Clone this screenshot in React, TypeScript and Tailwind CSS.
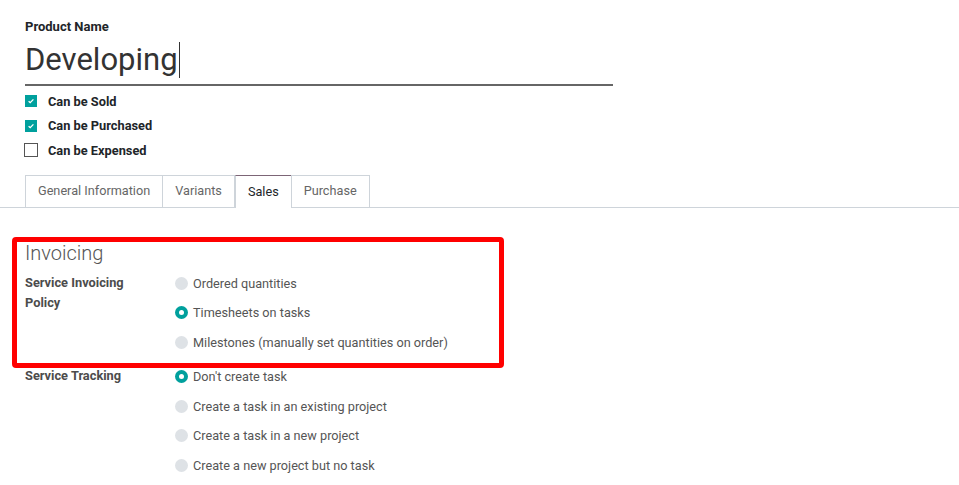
import React from "react";

const font = { fontFamily: "Roboto, 'Noto Sans', sans-serif" };

function Check({ checked }: { checked: boolean }) {
  return checked ? (
    <span className="flex h-[12px] w-[12px] items-center justify-center bg-[#00a09d]">
      <svg width="8" height="8" viewBox="0 0 8 8">
        <path d="M1.6 4.2 L3.2 5.6 L6.4 2.4" stroke="white" strokeWidth="1.3" fill="none" />
      </svg>
    </span>
  ) : (
    <span className="block h-[14px] w-[14px] border border-[#555] bg-white -ml-[1px]" />
  );
}

function Radio({ checked, label }: { checked: boolean; label: string }) {
  return (
    <div className="flex h-[29.5px] items-center">
      {checked ? (
        <span className="flex h-[13px] w-[13px] items-center justify-center rounded-full bg-[#00a09d]">
          <span className="h-[5px] w-[5px] rounded-full bg-white" />
        </span>
      ) : (
        <span className="h-[13px] w-[13px] rounded-full bg-[#dee2e6]" />
      )}
      <span className="ml-[5px] text-[12.7px] text-[#555]">{label}</span>
    </div>
  );
}

export default function App() {
  return (
    <div className="relative h-[485px] w-[959px] overflow-hidden bg-white text-[#212529]" style={font}>
      <div className="px-[25px] pt-[18px]">
        <div className="text-[13px] font-bold leading-[18px] text-[#212529]">Product Name</div>
        <div className="mt-[3px] flex h-[47px] w-[588px] items-start border-b-2 border-[#666] pt-[1px]">
          <span className="text-[31px] leading-[40px] text-[#333]">Developing</span>
          <span className="ml-[1px] mt-[2px] h-[36px] w-[1.5px] bg-[#333]" />
        </div>
        <div className="mt-[3px] flex flex-col">
          {[
            ["Can be Sold", true],
            ["Can be Purchased", true],
            ["Can be Expensed", false],
          ].map(([l, c]) => (
            <div key={l as string} className="flex h-[24.5px] items-center">
              <div className="flex w-[23px] items-center">
                <Check checked={c as boolean} />
              </div>
              <span className="text-[12.8px] font-bold text-[#212529]">{l as string}</span>
            </div>
          ))}
        </div>
      </div>

      <div className="mt-[12px] flex border-b border-[#ced4da] pl-[25px]">
        {["General Information", "Variants", "Sales", "Purchase"].map((t) => {
          const active = t === "Sales";
          return (
            <div
              key={t}
              className={
                active
                  ? "-mb-[1px] flex h-[33px] items-center border-x border-t border-x-[#ced4da] border-t-[#7c6576] bg-white px-[12px] text-[12.7px] text-[#212529]"
                  : "-ml-[1px] first:ml-0 flex h-[32px] items-center border border-b-0 border-[#ced4da] px-[12px] text-[12.7px] text-[#666]"
              }
            >
              {t}
            </div>
          );
        })}
      </div>

      <div className="px-[25px] pt-[31px]">
        <div className="text-[20px] leading-[28px] text-[#555] font-light">Invoicing</div>
        <div className="mt-[5px] flex">
          <div className="w-[150px]">
            <div className="w-[115px] pt-[1px] text-[12.8px] font-bold leading-[20px] text-[#4c4c4c]">
              Service Invoicing Policy
            </div>
          </div>
          <div className="-mt-[3px] flex flex-col">
            <Radio checked={false} label="Ordered quantities" />
            <Radio checked={true} label="Timesheets on tasks" />
            <Radio checked={false} label="Milestones (manually set quantities on order)" />
          </div>
        </div>
        <div className="mt-[5px] flex">
          <div className="w-[150px] pt-[4px] text-[12.8px] font-bold leading-[20px] text-[#4c4c4c]">
            Service Tracking
          </div>
          <div className="flex flex-col">
            <Radio checked={true} label="Don't create task" />
            <Radio checked={false} label="Create a task in an existing project" />
            <Radio checked={false} label="Create a task in a new project" />
            <Radio checked={false} label="Create a new project but no task" />
          </div>
        </div>
      </div>

      <div className="pointer-events-none absolute left-[12px] top-[237px] h-[131px] w-[492px] rounded-[4px] border-[5px] border-[#ff0000] blur-[0.4px]" />
    </div>
  );
}
